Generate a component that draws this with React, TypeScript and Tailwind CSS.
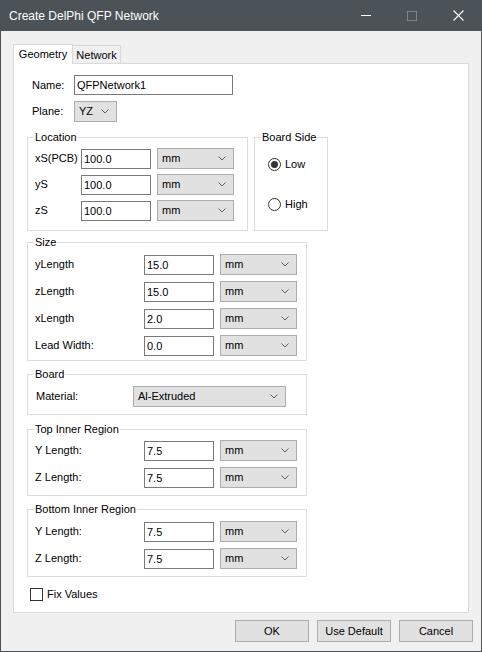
import React from 'react';

function Chevron() {
  return (
    <svg width="8" height="5" viewBox="0 0 8 5" className="shrink-0">
      <polyline points="0.5,0.5 4,4 7.5,0.5" fill="none" stroke="#606060" strokeWidth="1" />
    </svg>
  );
}

function Combo({ value, w }: { value: string; w: string }) {
  return (
    <div className={`${w} h-[21px] shrink-0 bg-[#e1e1e1] border border-[#adadad] flex items-center justify-between pl-[4px] pr-[7px]`}>
      <span>{value}</span>
      <Chevron />
    </div>
  );
}

function TextBox({ value, w }: { value: string; w: string }) {
  return (
    <input
      readOnly
      defaultValue={value}
      className={`${w} h-[20px] shrink-0 border border-[#7a7a7a] bg-white px-[2px] outline-none`}
    />
  );
}

function Group({ title, className, children }: { title: string; className: string; children: React.ReactNode }) {
  return (
    <fieldset className={`border border-[#dcdcdc] shrink-0 ${className}`}>
      <legend className="ml-[6px] px-[1px] h-[14px] leading-[14px] whitespace-nowrap">{title}</legend>
      {children}
    </fieldset>
  );
}

function Row({ label, value, labelW }: { label: string; value: string; labelW: string }) {
  return (
    <div className="flex items-center h-[21px]">
      <span className={`${labelW} shrink-0`}>{label}</span>
      <TextBox value={value} w="w-[70px]" />
      <div className="w-[6px]" />
      <Combo value="mm" w="w-[77px]" />
    </div>
  );
}

function Radio({ label, checked }: { label: string; checked?: boolean }) {
  return (
    <div className="flex items-center h-[16px] gap-[4px]">
      <div className="w-[13px] h-[13px] rounded-full border border-[#333333] bg-white flex items-center justify-center">
        {checked && <div className="w-[7px] h-[7px] rounded-full bg-[#333333]" />}
      </div>
      <span>{label}</span>
    </div>
  );
}

export default function App() {
  const sizeRows = [
    { label: 'yLength', value: '15.0' },
    { label: 'zLength', value: '15.0' },
    { label: 'xLength', value: '2.0' },
    { label: 'Lead Width:', value: '0.0' },
  ];

  return (
    <div className="w-[482px] h-[652px] flex flex-col bg-[#f0f0f0] border border-t-0 border-[#4b5359] text-[11px] text-black font-['Liberation_Sans',Arial,sans-serif] overflow-hidden">
      {/* Title bar */}
      <div className="h-[31px] shrink-0 bg-[#4b5359] flex items-center justify-between pl-[8px]">
        <span className="text-[12px] text-white">Create DelPhi QFP Network</span>
        <div className="flex items-center h-full">
          <div className="w-[46px] h-full flex items-center justify-center">
            <div className="w-[10px] h-px bg-white" />
          </div>
          <div className="w-[46px] h-full flex items-center justify-center">
            <div className="w-[10px] h-[10px] border border-[#7d8489]" />
          </div>
          <div className="w-[46px] h-full flex items-center justify-center">
            <svg width="11" height="11" viewBox="0 0 11 11">
              <path d="M0.5 0.5 L10.5 10.5 M10.5 0.5 L0.5 10.5" stroke="#ffffff" strokeWidth="1.1" />
            </svg>
          </div>
        </div>
      </div>

      {/* Body */}
      <div className="flex flex-col pt-[12px] pl-[12px] pr-[8px]">
        {/* Tabs */}
        <div className="flex items-end h-[20px]">
          <div className="w-[60px] h-[20px] bg-white border border-b-0 border-[#d9d9d9] flex items-center justify-center -mb-px relative z-10 pb-px">
            Geometry
          </div>
          <div className="w-[48px] h-[18px] bg-[#f0f0f0] border border-l-0 border-b-0 border-[#d9d9d9] flex items-center justify-center pt-px">
            Network
          </div>
        </div>

        {/* Panel */}
        <div className="w-[456px] h-[550px] bg-white border border-[#d9d9d9] flex flex-col pl-[13px] pt-[11px]">
          <div className="flex items-center h-[20px] pl-[5px]">
            <span className="w-[42px] shrink-0">Name:</span>
            <TextBox value="QFPNetwork1" w="w-[159px]" />
          </div>
          <div className="flex items-center h-[21px] pl-[5px] mt-[6px]">
            <span className="w-[42px] shrink-0">Plane:</span>
            <Combo value="YZ" w="w-[43px]" />
          </div>

          <div className="flex mt-[8px] gap-[6px]">
            <Group title="Location" className="w-[221px] h-[101px]">
              <div className="flex flex-col gap-[5px] pt-[4px] pl-[7px]">
                <Row label="xS(PCB)" value="100.0" labelW="w-[46px]" />
                <Row label="yS" value="100.0" labelW="w-[46px]" />
                <Row label="zS" value="100.0" labelW="w-[46px]" />
              </div>
            </Group>
            <Group title="Board Side" className="w-[74px] h-[101px]">
              <div className="flex flex-col gap-[24px] pt-[12px] pl-[13px]">
                <Radio label="Low" checked />
                <Radio label="High" />
              </div>
            </Group>
          </div>

          <Group title="Size" className="w-[280px] h-[126px] mt-[4px]">
            <div className="flex flex-col gap-[6px] pt-[5px] pl-[7px]">
              {sizeRows.map((r) => (
                <Row key={r.label} label={r.label} value={r.value} labelW="w-[109px]" />
              ))}
            </div>
          </Group>

          <Group title="Board" className="w-[280px] h-[48px] mt-[6px]">
            <div className="flex items-center h-[21px] mt-[5px] pl-[8px]">
              <span className="w-[97px] shrink-0">Material:</span>
              <Combo value="Al-Extruded" w="w-[153px]" />
            </div>
          </Group>

          <Group title="Top Inner Region" className="w-[280px] h-[74px] mt-[7px]">
            <div className="flex flex-col gap-[6px] pt-[4px] pl-[7px]">
              <Row label="Y Length:" value="7.5" labelW="w-[109px]" />
              <Row label="Z Length:" value="7.5" labelW="w-[109px]" />
            </div>
          </Group>

          <Group title="Bottom Inner Region" className="w-[280px] h-[75px] mt-[6px]">
            <div className="flex flex-col gap-[6px] pt-[5px] pl-[7px]">
              <Row label="Y Length:" value="7.5" labelW="w-[109px]" />
              <Row label="Z Length:" value="7.5" labelW="w-[109px]" />
            </div>
          </Group>

          <div className="flex items-center gap-[4px] mt-[9px] pl-[3px]">
            <div className="w-[13px] h-[13px] border border-[#333333] bg-white" />
            <span>Fix Values</span>
          </div>
        </div>

        {/* Buttons */}
        <div className="flex justify-end gap-[8px] mt-[7px]">
          <button className="w-[74px] h-[22px] bg-[#e1e1e1] border border-[#adadad]">OK</button>
          <button className="w-[74px] h-[22px] bg-[#e1e1e1] border border-[#adadad]">Use Default</button>
          <button className="w-[74px] h-[22px] bg-[#e1e1e1] border border-[#adadad]">Cancel</button>
        </div>
      </div>
    </div>
  );
}
